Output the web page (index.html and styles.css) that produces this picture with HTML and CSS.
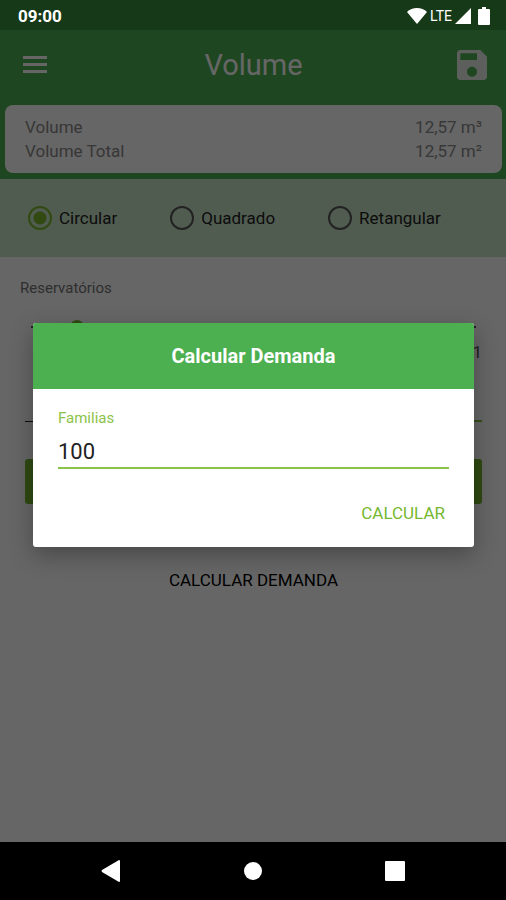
FILE: index.html
```html
<!DOCTYPE html>
<html lang="pt-BR">
<head>
  <title>Volume</title>

  <meta charset="utf-8">
  <meta name="viewport" content="width=device-width, initial-scale=1">
  <link rel="stylesheet" href="styles.css">
</head>
<body>

  <div class="status">
    <span class="time">09:00</span>
    <div class="status-icons">
      <svg width="20" height="16" viewBox="0 0 20 16"><path d="M10 16L0 4Q4 0 10 0t10 4z"/></svg>
      <span class="network">LTE</span>
      <svg class="signal" width="16" height="16" viewBox="0 0 16 16"><path d="M16 0v16H0z"/></svg>
      <svg class="battery" width="12" height="18" viewBox="0 0 12 18"><path d="M4 0h4v2h3a1 1 0 0 1 1 1v14a1 1 0 0 1-1 1H1a1 1 0 0 1-1-1V3a1 1 0 0 1 1-1h3z"/></svg>
    </div>
  </div>

  <div class="screen">
    <header class="header">
      <div class="toolbar">
        <button class="icon-button" aria-label="Menu">
          <svg width="24" height="18" viewBox="0 0 24 18"><path d="M0 0h24v3H0zM0 7h24v3H0zM0 14h24v3H0z"/></svg>
        </button>
        <h1 class="title">Volume</h1>
        <button class="icon-button save" aria-label="Salvar">
          <svg width="40" height="40" viewBox="0 0 24 24"><path d="M17 3H5c-1.110 0-2 .9-2 2v14c0 1.100.890 2 2 2h14c1.100 0 2-.9 2-2V7l-4-4zm-5 16c-1.660 0-3-1.340-3-3s1.340-3 3-3 3 1.340 3 3-1.340 3-3 3zm3-10H5V5h10v4z"/></svg>
        </button>
      </div>
      <dl class="card">
        <div class="card-row"><dt>Volume</dt><dd>12,57 m³</dd></div>
        <div class="card-row"><dt>Volume Total</dt><dd>12,57 m²</dd></div>
      </dl>
    </header>

    <div class="shapes">
      <label class="shape"><input type="radio" name="shape" checked>Circular</label>
      <label class="shape"><input type="radio" name="shape">Quadrado</label>
      <label class="shape"><input type="radio" name="shape">Retangular</label>
    </div>

    <main class="form">
      <label class="form-label" for="tanks">Reservatórios</label>
      <div class="slider">
        <input type="range" id="tanks" min="0" max="11" value="1">
        <output for="tanks">1</output>
      </div>
      <div class="sizes">
        <input type="text" aria-label="Raio">
        <input type="text" class="focused" aria-label="Altura">
      </div>
      <button class="submit" aria-label="Calcular volume"></button>
      <button class="demand">CALCULAR DEMANDA</button>
    </main>

    <div class="overlay">
      <div class="dialog" role="dialog" aria-labelledby="dialog-title">
        <h2 class="dialog-title" id="dialog-title">Calcular Demanda</h2>
        <div class="dialog-body">
          <label for="families">Familias</label>
          <input type="text" id="families" value="100">
          <button class="dialog-action">CALCULAR</button>
        </div>
      </div>
    </div>
  </div>

  <nav class="navbar">
    <button aria-label="Voltar"><svg width="20" height="22" viewBox="0 0 20 22"><path d="M1 10L18 0q1 0 1 1v20q0 1-1 1L1 12q-1-1 0-2z"/></svg></button>
    <button aria-label="Início"><svg width="20" height="20" viewBox="0 0 20 20"><circle cx="10" cy="10" r="9"/></svg></button>
    <button aria-label="Recentes"><svg width="20" height="20" viewBox="0 0 20 20"><rect width="20" height="20" rx="1"/></svg></button>
  </nav>

</body>
</html>
```

FILE: styles.css
```css
* {
  box-sizing: border-box;
}
body {
  display: flex;
  flex-direction: column;
  font-family: Roboto, sans-serif;
  font-size: 17px;
  margin: 0;
  min-height: 100vh;
}
button, input {
  background: none;
  border: none;
  border-radius: 0;
  color: inherit;
  font: inherit;
  margin: 0;
  outline: none;
  padding: 0;
}
svg {
  display: block;
  fill: currentColor;
}

.status {
  align-items: center;
  background: #163918;
  color: white;
  display: flex;
  height: 30px;
  justify-content: space-between;
  padding: 1px 16px 0 18px;
}
.time {
  font-weight: bold;
}
.status-icons {
  align-items: center;
  display: flex;
}
.network {
  font-size: 14px;
  margin: 0 3px;
}
.battery {
  margin-left: 7px;
}

.screen {
  background: white;
  display: flex;
  flex: 1;
  flex-direction: column;
  position: relative;
}
.header {
  background: #4caf50;
  padding: 0 4px 6px 5px;
}
.toolbar {
  align-items: center;
  color: white;
  display: flex;
  height: 75px;
  justify-content: space-between;
  padding: 0 10px 5px 18px;
}
.icon-button {
  display: flex;
  width: 40px;
}
.save {
  color: #e8eee8;
}
.title {
  font-size: 29px;
  font-weight: normal;
  margin: 0;
  padding-right: 8px;
}
.card {
  background: white;
  border-radius: 8px;
  color: #8a8a8a;
  line-height: 24px;
  margin: 0;
  padding: 10px 20px;
}
.card-row {
  display: flex;
  justify-content: space-between;
}
.card dd {
  margin: 0;
}

.shapes {
  align-items: center;
  background: #c8e6c9;
  display: flex;
  gap: 53px;
  height: 78px;
  padding: 0 28px;
}
.shape {
  align-items: center;
  color: #222;
  display: flex;
  gap: 7px;
}
.shape input {
  appearance: none;
  border: 2px solid #555;
  border-radius: 50%;
  height: 24px;
  width: 24px;
}
.shape input:checked {
  background: radial-gradient(circle, #7cb82f 6px, transparent 7px);
  border-color: #7cb82f;
}

.form {
  display: flex;
  flex-direction: column;
  padding: 20px 24px 20px 25px;
}
.form-label {
  color: #757575;
  font-size: 15px;
  line-height: 22px;
  margin-left: -5px;
}
.slider {
  display: flex;
  flex-direction: column;
  padding-top: 21px;
}
.slider input {
  appearance: none;
  background: linear-gradient(#555, #555) center / 100% 2px no-repeat;
  height: 14px;
  margin: 0 6px;
}
.slider input::-webkit-slider-thumb {
  appearance: none;
  background: #7cb82f;
  border-radius: 50%;
  height: 14px;
  width: 14px;
}
.slider output {
  align-self: flex-end;
  color: #555;
  line-height: 36px;
}
.sizes {
  display: flex;
  gap: 16px;
}
.sizes input {
  border-bottom: 1px solid #222;
  flex: 1;
  height: 52px;
  min-width: 0;
}
.sizes .focused {
  border-bottom: 2px solid #8bc34a;
}
.submit {
  background: #76b82f;
  border-radius: 3px;
  height: 45px;
  margin-top: 37px;
}
.demand {
  align-self: center;
  color: black;
  line-height: 24px;
  margin-top: 64px;
}

.overlay {
  align-items: center;
  background: rgba(0, 0, 0, .6);
  display: flex;
  inset: 0;
  justify-content: center;
  padding: 0 32px 2px 33px;
  position: absolute;
}
.dialog {
  background: white;
  border-radius: 3px;
  box-shadow: 0 8px 24px rgba(0, 0, 0, .3);
  flex: 1;
  overflow: hidden;
}
.dialog-title {
  background: #4caf50;
  color: white;
  font-size: 20px;
  line-height: 66px;
  margin: 0;
  text-align: center;
}
.dialog-body {
  display: flex;
  flex-direction: column;
  padding: 18px 25px 20px;
}
.dialog-body label {
  color: #8bc34a;
  font-size: 15px;
  line-height: 22px;
}
.dialog-body input {
  border-bottom: 2px solid #8bc34a;
  color: #222;
  font-size: 22px;
  height: 40px;
  padding-top: 6px;
  width: 100%;
}
.dialog-action {
  align-self: flex-end;
  color: #76b82f;
  line-height: 28px;
  margin: 30px 4px 0;
}

.navbar {
  align-items: center;
  background: black;
  color: white;
  display: flex;
  height: 58px;
  justify-content: space-between;
  padding: 0 20%;
}
```
